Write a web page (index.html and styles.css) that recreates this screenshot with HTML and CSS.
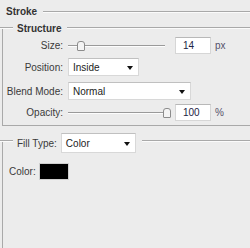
FILE: index.html
```html
<!DOCTYPE html>
<html>
<head>
<meta charset="utf-8">
<link rel="stylesheet" href="styles.css">
</head>
<body>
<div class="panel">
  <div class="title-row">
    <span class="title">Stroke</span>
    <span class="rule"></span>
  </div>

  <section class="group structure">
    <div class="legend-row">
      <span class="lead"></span>
      <span class="legend">Structure</span>
      <span class="rule"></span>
    </div>

    <div class="row row-size">
      <span class="lbl">Size:</span>
      <div class="slider"><span class="thumb" style="left:9px"></span></div>
      <span class="num">14</span>
      <span class="unit">px</span>
    </div>

    <div class="row row-pos">
      <span class="lbl">Position:</span>
      <div class="select sel-pos">Inside<span class="arrow"></span></div>
    </div>

    <div class="row row-blend">
      <span class="lbl">Blend Mode:</span>
      <div class="select sel-blend">Normal<span class="arrow"></span></div>
    </div>

    <div class="row row-op">
      <span class="lbl">Opacity:</span>
      <div class="slider"><span class="thumb" style="left:95px"></span></div>
      <span class="num">100</span>
      <span class="unit">%</span>
    </div>
  </section>

  <section class="group fill">
    <div class="legend-row fill-legend">
      <span class="lead"></span>
      <span class="fill-lbl">Fill Type:</span>
      <div class="select sel-fill">Color<span class="arrow"></span></div>
      <span class="rule"></span>
    </div>
    <div class="color-row">
      <span class="color-lbl">Color:</span>
      <span class="swatch"></span>
    </div>
  </section>
</div>
</body>
</html>
```

FILE: styles.css
```css
html, body {
  margin: 0;
  padding: 0;
  background: #ececec;
}

body {
  font-family: "Liberation Sans", Arial, sans-serif;
  font-size: 10px;
  color: #3a3a3a;
  width: 250px;
  height: 248px;
  overflow: hidden;
}

.panel {
  display: flex;
  flex-direction: column;
  height: 248px;
  padding-top: 6px;
  box-sizing: border-box;
}

.rule {
  flex: 1;
  height: 0;
  border-top: 1px solid #a9a9a9;
  border-bottom: 1px solid #fbfbfb;
}

.title-row {
  display: flex;
  align-items: center;
  height: 12px;
  padding-left: 6px;
}

.title {
  font-weight: bold;
  color: #333;
  margin-right: 6px;
  line-height: 12px;
}

.group {
  margin-left: 2px;
  border-left: 1px solid #a9a9a9;
}

.structure {
  margin-top: 10px;
  border-bottom: 1px solid #a9a9a9;
  padding-bottom: 4px;
}

.legend-row {
  display: flex;
  align-items: center;
  height: 12px;
  margin-top: -6px;
  margin-left: -3px;
}

.lead {
  width: 13px;
  height: 0;
  border-top: 1px solid #a9a9a9;
  border-bottom: 1px solid #fbfbfb;
  margin-right: 4px;
}

.legend {
  font-weight: bold;
  color: #333;
  margin-right: 6px;
}

.row {
  display: flex;
  align-items: center;
  height: 17px;
}

.row-size { margin-top: 3px; }
.row-pos { margin-top: 4px; height: 18px; }
.row-blend { margin-top: 6px; height: 18px; }
.row-op { margin-top: 4px; }

.lbl {
  width: 60px;
  text-align: right;
  margin-right: 5px;
}

.slider {
  position: relative;
  width: 97px;
  height: 0;
  border-top: 1px solid #9a9a9a;
  border-bottom: 1px solid #fdfdfd;
  margin-right: 10px;
}

.thumb {
  position: absolute;
  top: -5px;
  width: 6px;
  height: 8px;
  background: #f4f4f4;
  border: 1px solid #8c8c8c;
  border-radius: 3px 3px 1px 1px;
}

.num {
  box-sizing: border-box;
  width: 36px;
  height: 17px;
  background: #fff;
  border: 1px solid #d6d6d6;
  border-top-color: #b8b8b8;
  padding: 2px 0 0 7px;
  color: #222244;
  margin-right: 4px;
}

.unit {
  color: #55506a;
}

.select {
  position: relative;
  box-sizing: border-box;
  height: 18px;
  background: #fff;
  border: 1px solid #d8d8d8;
  border-top-color: #c0c0c0;
  padding: 3px 0 0 4px;
  color: #222;
}

.arrow {
  position: absolute;
  right: 5px;
  top: 7px;
  width: 0;
  height: 0;
  border-left: 3px solid transparent;
  border-right: 3px solid transparent;
  border-top: 4px solid #111;
}

.sel-pos { width: 71px; }
.sel-blend { width: 123px; }

.fill {
  flex: 1;
  margin-top: 15px;
}

.fill-legend {
  height: 20px;
  margin-top: -8px;
}

.fill-legend .rule {
  margin-bottom: 4px;
  margin-left: 6px;
}

.fill-legend .lead {
  margin-bottom: 4px;
}

.fill-lbl {
  margin-right: 4px;
}

.sel-fill {
  width: 75px;
  height: 20px;
  padding-top: 4px;
}

.sel-fill .arrow {
  top: 8px;
}

.color-row {
  display: flex;
  align-items: center;
  margin-top: 10px;
  padding-left: 6px;
}

.color-lbl {
  margin-right: 3px;
}

.swatch {
  box-sizing: border-box;
  width: 30px;
  height: 17px;
  background: #000;
  border: 1px solid #cfcfcf;
}
```
